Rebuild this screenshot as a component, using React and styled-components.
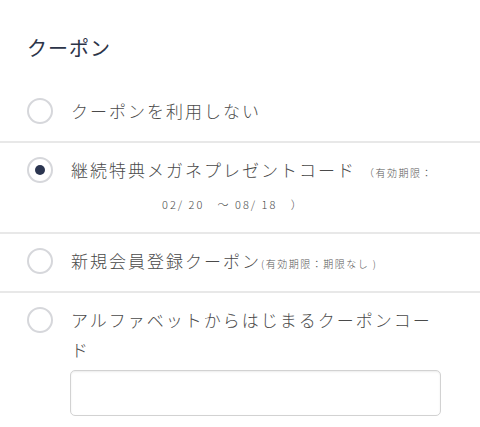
import React, { useState } from 'react';
import styled, { createGlobalStyle } from 'styled-components';

const GlobalStyle = createGlobalStyle`
  body {
    margin: 0;
    background: #fff;
    font-family: "Noto Sans CJK JP", "Noto Sans", sans-serif;
  }
`;

const Wrapper = styled.div`
  width: 480px;
  padding-top: 30px;
`;

const Title = styled.h2`
  margin: 0 0 18px;
  padding-left: 27px;
  font-size: 20px;
  font-weight: 400;
  letter-spacing: 1px;
  line-height: 36px;
  color: #2c3448;
`;

const Row = styled.label`
  display: flex;
  align-items: flex-start;
  padding: 12px 27px 15px 27px;
  border-bottom: ${(p) => (p.$last ? 'none' : '2px solid #e8e8e8')};
  cursor: pointer;
`;

const Radio = styled.span`
  flex: 0 0 auto;
  width: 26px;
  height: 26px;
  margin-top: 2px;
  margin-right: 18px;
  box-sizing: border-box;
  border: 2px solid #d6d7db;
  border-radius: 50%;
  display: flex;
  align-items: center;
  justify-content: center;

  &::after {
    content: '';
    width: 10px;
    height: 10px;
    border-radius: 50%;
    background: #2b3550;
    display: ${(p) => (p.$checked ? 'block' : 'none')};
  }
`;

const Body = styled.div`
  width: 371px;
`;

const Label = styled.span`
  font-size: 17px;
  font-weight: 300;
  line-height: 30px;
  letter-spacing: 2px;
  color: #4a4a4a;
`;

const Note = styled.span`
  font-size: 10px;
  font-weight: 300;
  letter-spacing: 1.5px;
  color: #555;
  margin-left: ${(p) => p.$gap || 0}px;
`;

const NoteLine = styled.div`
  margin-top: 6px;
  padding-left: 91px;
  font-size: 11px;
  font-weight: 300;
  line-height: 26px;
  letter-spacing: 2px;
  color: #4a4a4a;
  white-space: pre;
`;

const CodeInput = styled.input`
  display: block;
  width: 371px;
  height: 46px;
  box-sizing: border-box;
  margin: 5px 0 0 -1px;
  border: 1px solid #d2d2d2;
  border-radius: 5px;
  box-shadow: inset 0 1px 2px rgba(0, 0, 0, 0.08);
  font-size: 16px;
  padding: 0 10px;
  outline: none;
`;

const options = [
  { id: 'none', label: 'クーポンを利用しない' },
  { id: 'glasses', label: '継続特典メガネプレゼントコード', note: '（有効期限：', gap: 8, extra: '02/ 20   〜 08/ 18   ）' },
  { id: 'new', label: '新規会員登録クーポン', note: '(有効期限：期限なし )' },
  { id: 'code', label: 'アルファベットからはじまるクーポンコード', input: true },
];

const App = () => {
  const [selected, setSelected] = useState('glasses');

  return (
    <Wrapper>
      <GlobalStyle />
      <Title>クーポン</Title>
      {options.map((o, i) => (
        <Row key={o.id} $last={i === options.length - 1} onClick={() => setSelected(o.id)}>
          <Radio $checked={selected === o.id} />
          <Body>
            <Label>{o.label}</Label>
            {o.note && <Note $gap={o.gap}>{o.note}</Note>}
            {o.extra && <NoteLine>{o.extra}</NoteLine>}
            {o.input && <CodeInput type="text" />}
          </Body>
        </Row>
      ))}
    </Wrapper>
  );
};

export default App;
